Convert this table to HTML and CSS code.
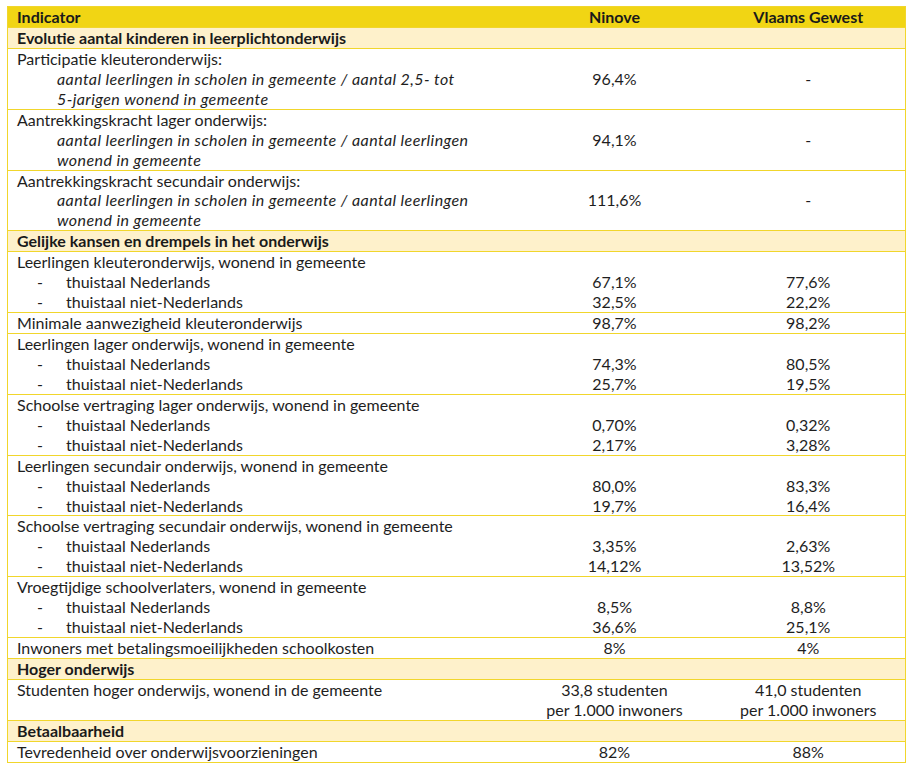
FILE: index.html
```html
<!DOCTYPE html>
<html lang="nl">
<head>
<meta charset="utf-8">
<title>Onderwijs indicatoren</title>
<link rel="stylesheet" href="styles.css">
</head>
<body>
<table class="ind">
  <colgroup><col class="c1"><col class="c2"><col class="c3"></colgroup>
  <thead>
    <tr class="head"><th class="lab">Indicator</th><th>Ninove</th><th>Vlaams Gewest</th></tr>
  </thead>
  <tbody>
    <tr class="sec"><td colspan="3">Evolutie aantal kinderen in leerplichtonderwijs</td></tr>
    <tr><td>Participatie kleuteronderwijs:<div class="def">aantal leerlingen in scholen in gemeente / aantal 2,5- tot<br>5-jarigen wonend in gemeente</div></td><td class="v">96,4%</td><td class="v">-</td></tr>
    <tr><td>Aantrekkingskracht lager onderwijs:<div class="def">aantal leerlingen in scholen in gemeente / aantal leerlingen<br>wonend in gemeente</div></td><td class="v">94,1%</td><td class="v">-</td></tr>
    <tr><td>Aantrekkingskracht secundair onderwijs:<div class="def">aantal leerlingen in scholen in gemeente / aantal leerlingen<br>wonend in gemeente</div></td><td class="v">111,6%</td><td class="v">-</td></tr>

    <tr class="sec"><td colspan="3">Gelijke kansen en drempels in het onderwijs</td></tr>
    <tr><td>Leerlingen kleuteronderwijs, wonend in gemeente<div class="li"><span class="d">-</span>thuistaal Nederlands</div><div class="li"><span class="d">-</span>thuistaal niet-Nederlands</div></td><td class="v b"><br>67,1%<br>32,5%</td><td class="v b"><br>77,6%<br>22,2%</td></tr>
    <tr><td>Minimale aanwezigheid kleuteronderwijs</td><td class="v">98,7%</td><td class="v">98,2%</td></tr>
    <tr><td>Leerlingen lager onderwijs, wonend in gemeente<div class="li"><span class="d">-</span>thuistaal Nederlands</div><div class="li"><span class="d">-</span>thuistaal niet-Nederlands</div></td><td class="v b"><br>74,3%<br>25,7%</td><td class="v b"><br>80,5%<br>19,5%</td></tr>
    <tr><td>Schoolse vertraging lager onderwijs, wonend in gemeente<div class="li"><span class="d">-</span>thuistaal Nederlands</div><div class="li"><span class="d">-</span>thuistaal niet-Nederlands</div></td><td class="v b"><br>0,70%<br>2,17%</td><td class="v b"><br>0,32%<br>3,28%</td></tr>
    <tr><td>Leerlingen secundair onderwijs, wonend in gemeente<div class="li"><span class="d">-</span>thuistaal Nederlands</div><div class="li"><span class="d">-</span>thuistaal niet-Nederlands</div></td><td class="v b"><br>80,0%<br>19,7%</td><td class="v b"><br>83,3%<br>16,4%</td></tr>
    <tr><td>Schoolse vertraging secundair onderwijs, wonend in gemeente<div class="li"><span class="d">-</span>thuistaal Nederlands</div><div class="li"><span class="d">-</span>thuistaal niet-Nederlands</div></td><td class="v b"><br>3,35%<br>14,12%</td><td class="v b"><br>2,63%<br>13,52%</td></tr>
    <tr><td>Vroegtijdige schoolverlaters, wonend in gemeente<div class="li"><span class="d">-</span>thuistaal Nederlands</div><div class="li"><span class="d">-</span>thuistaal niet-Nederlands</div></td><td class="v b"><br>8,5%<br>36,6%</td><td class="v b"><br>8,8%<br>25,1%</td></tr>
    <tr><td>Inwoners met betalingsmoeilijkheden schoolkosten</td><td class="v">8%</td><td class="v">4%</td></tr>

    <tr class="sec"><td colspan="3">Hoger onderwijs</td></tr>
    <tr><td>Studenten hoger onderwijs, wonend in de gemeente<br>&nbsp;</td><td class="v">33,8 studenten<br>per 1.000 inwoners</td><td class="v">41,0 studenten<br>per 1.000 inwoners</td></tr>

    <tr class="sec"><td colspan="3">Betaalbaarheid</td></tr>
    <tr><td>Tevredenheid over onderwijsvoorzieningen</td><td class="v">82%</td><td class="v">88%</td></tr>
  </tbody>
</table>
</body>
</html>
```
FILE: styles.css
```css
html, body {
  background: #ffffff;
}
body {
  margin: 6px 0 0 7px;
  font-family: Lato, "Open Sans", sans-serif;
  font-size: 16px;
  color: #1e1e1e;
}
.ind {
  width: 898px;
  border-collapse: collapse;
  table-layout: fixed;
  border: 1px solid #f1d62c;
}
.c1 { width: 510px; }
.c2 { width: 194px; }
.c3 { width: 194px; }
.ind th, .ind td {
  padding: 0 9px;
  line-height: 19.94px;
  border-bottom: 1px solid #f1d62c;
  vertical-align: top;
  white-space: nowrap;
}
.ind th {
  background: #f1d514;
  font-weight: 700;
  text-align: center;
  color: #1a1a1a;
}
.ind th.lab { text-align: left; }
.sec td {
  background: #fef1cb;
  font-weight: 700;
  color: #1a1a1a;
}
.def {
  font-style: italic;
  padding-left: 40px;
  letter-spacing: 0.4px;
}
.li {
  display: flex;
}
.li .d {
  width: 49px;
  padding-left: 20px;
  box-sizing: border-box;
  flex: none;
}
.ind td.v {
  text-align: center;
  vertical-align: middle;
}
.ind td.v.b {
  vertical-align: top;
}
```
